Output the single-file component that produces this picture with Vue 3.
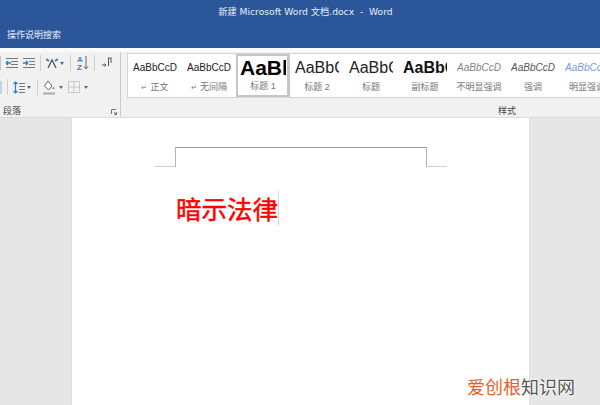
<script setup>
const styles = [
  { sample: 'AaBbCcDd', name: '正文', cls: 'normal', mark: true },
  { sample: 'AaBbCcDd', name: '无间隔', cls: 'normal', mark: true },
  { sample: 'AaBb', name: '标题 1', cls: 'h1', selected: true },
  { sample: 'AaBbC', name: '标题 2', cls: 'h2' },
  { sample: 'AaBbC', name: '标题', cls: 'h2' },
  { sample: 'AaBbC', name: '副标题', cls: 'h3' },
  { sample: 'AaBbCcDd', name: '不明显强调', cls: 'em1' },
  { sample: 'AaBbCcDd', name: '强调', cls: 'em2' },
  { sample: 'AaBbCcDd', name: '明显强调', cls: 'em3' }
]
</script>

<template>
  <div class="window">
    <header class="titlebar">
      <div class="title">新建 Microsoft Word 文档.docx&nbsp; - &nbsp;Word</div>
      <div class="search">操作说明搜索</div>
    </header>

    <section class="ribbon">
      <div class="para">
        <div class="tool-row">
          <svg width="36" height="14" viewBox="0 0 36 14">
            <path d="M.5 0v14" stroke="#c4c4c4" />
            <path d="M6 2.500h12M6 11.500h12M11 5.500h7M11 8.500h7" stroke="#7a7a7a" />
            <path d="M6 7h5M6 7l2-2M6 7l2 2" stroke="#2f7fc8" fill="none" stroke-width="1.300" />
            <path d="M23 2.500h12M23 11.500h12M29 5.500h6M29 8.500h6" stroke="#7a7a7a" />
            <path d="M23 7h5M28 7l-2-2M28 7l-2 2" stroke="#2f7fc8" fill="none" stroke-width="1.300" />
          </svg>
          <i class="sep ml4"></i>
          <svg class="ml5" width="12" height="14" viewBox="0 0 12 14">
            <path d="M2 12l4-8 4 8" stroke="#555" fill="none" stroke-width="1.300" />
            <path d="M0 3l3 2M12 3L9 5" stroke="#2f7fc8" stroke-width="2" />
          </svg>
          <span class="drop ml2"></span>
          <i class="sep ml6"></i>
          <svg class="ml6" width="12" height="16" viewBox="0 0 12 16">
            <text x="0" y="7" class="az a">A</text>
            <text x="0" y="15" class="az z">Z</text>
            <path d="M9 1v13M7 11.500L9 14l2-2.500" stroke="#666" fill="none" />
          </svg>
          <i class="sep ml5"></i>
          <svg class="ml7" width="10" height="14" viewBox="0 0 10 14">
            <path d="M6.500 2v8M9 2v5M6 2h3.500" stroke="#555" fill="none" />
            <path d="M0 9h4L2.500 7.500M4 9l-1.500 1.500" stroke="#555" fill="none" />
          </svg>
        </div>
        <div class="tool-row second">
          <i class="align-btn"></i>
          <i class="sep ml5"></i>
          <svg class="ml5" width="12" height="15" viewBox="0 0 12 15">
            <path d="M2.500 2v11M.5 4l2-2 2 2M.5 11l2 2 2-2" stroke="#2f7fc8" fill="none" stroke-width="1.200" />
            <path d="M6 3.500h6M6 6.500h6M6 9.500h6M6 12.500h6" stroke="#777" />
          </svg>
          <span class="drop ml2"></span>
          <i class="sep ml6"></i>
          <svg class="ml5" width="12" height="15" viewBox="0 0 12 15">
            <path d="M5 1l4 5-3.500 4-4-4z" fill="#fff" stroke="#666" />
            <path d="M10.500 6.500l1 2.500h-2z" fill="#2f7fc8" />
            <path d="M0 13.500h12" stroke="#a9a9a9" stroke-width="2" />
          </svg>
          <span class="drop ml4"></span>
          <svg class="ml5" width="12" height="12" viewBox="0 0 12 12">
            <path d="M.5.500h11v11H.5zM6 .5v11M.5 6h11" fill="none" stroke="#a8a8a8" stroke-dasharray="1 1" />
          </svg>
          <span class="drop ml4"></span>
        </div>
        <div class="group-foot">
          <span class="group-label">段落</span>
          <svg width="6" height="6" viewBox="0 0 6 6">
            <path d="M.5 5V.5H5M3 3l2.500 2.500M5.500 3v2.500H3" fill="none" stroke="#777" />
          </svg>
        </div>
      </div>

      <div class="styles">
        <div class="gallery">
          <div
            v-for="item in styles"
            :key="item.name"
            class="style-item"
            :class="{ selected: item.selected }"
          >
            <div class="sample" :class="item.cls">{{ item.sample }}</div>
            <div class="style-name"><span v-if="item.mark" class="mark">↵</span>{{ item.name }}</div>
          </div>
        </div>
        <div class="group-label center">样式</div>
      </div>
    </section>

    <main class="canvas">
      <div class="page">
        <div class="header-mark">
          <i class="tick"></i>
          <i class="bracket"></i>
          <i class="tick"></i>
        </div>
        <div class="body-text"><span class="typed">暗示法律</span><i class="caret"></i></div>
      </div>
    </main>

    <div class="watermark">爱创根<span>知识网</span></div>
  </div>
</template>

<style scoped>
.window {
  position: relative;
  width: 600px;
  height: 405px;
  overflow: hidden;
  display: flex;
  flex-direction: column;
  background: #e6e6e6;
  font-family: "Liberation Sans", "Noto Sans CJK SC", sans-serif;
}
.titlebar {
  height: 48px;
  background: #2b579a;
  color: #e8eef7;
  font-size: 9px;
  flex: none;
}
.title {
  height: 23px;
  line-height: 23px;
  text-align: center;
  font-family: "DejaVu Sans", "Noto Sans CJK SC", sans-serif;
  font-size: 9.200px;
  padding-left: 11px;
}
.search {
  padding: 6px 0 0 7px;
  line-height: 13px;
}
.ribbon {
  height: 70px;
  flex: none;
  box-sizing: border-box;
  display: flex;
  background: #f1f1f1;
  border-top: 4px solid #fafafa;
  border-bottom: 1px solid #d9d9d9;
}
.para {
  width: 121px;
  flex: none;
  box-sizing: border-box;
  border-right: 1px solid #c9c9c9;
  margin-bottom: 1px;
  display: flex;
  flex-direction: column;
}
.tool-row {
  height: 22px;
  flex: none;
  display: flex;
  align-items: center;
}
.tool-row.second {
  margin-top: 2px;
}
.ml2 { margin-left: 2px; }
.ml4 { margin-left: 4px; }
.ml5 { margin-left: 5px; }
.ml6 { margin-left: 6px; }
.ml7 { margin-left: 7px; }
.sep {
  width: 1px;
  height: 16px;
  background: #d0d0d0;
}
.drop {
  width: 0;
  height: 0;
  border-left: 2.500px solid transparent;
  border-right: 2.500px solid transparent;
  border-top: 3px solid #666;
}
.align-btn {
  width: 2px;
  height: 13px;
  background: #bcd3ea;
}
.az {
  font-size: 8px;
  font-weight: bold;
}
.az.a {
  fill: #3b86cf;
}
.az.z {
  fill: #8a4fb8;
}
.group-foot {
  display: flex;
  justify-content: space-between;
  align-items: center;
  padding: 7px 3px 0 3px;
}
.group-label {
  font-size: 9px;
  line-height: 13px;
  color: #444;
}
.group-label.center {
  padding: 7px 0 0 371px;
}
.styles {
  flex: 1;
  min-width: 0;
  padding: 1px 0 0 6px;
}
.gallery {
  height: 45px;
  box-sizing: border-box;
  display: flex;
  background: #fff;
  border: 1px solid #d4d4d4;
  border-right: 0;
  overflow: hidden;
}
.style-item {
  width: 54px;
  flex: none;
  box-sizing: border-box;
  padding: 0 3px;
  overflow: hidden;
}
.style-item.selected {
  border: 3px solid #c6c6c6;
  border-left-width: 2px;
  padding: 0 1px 0 2px;
  margin-top: -1px;
  margin-bottom: -1px;
  height: 45px;
}
.sample {
  height: 27px;
  line-height: 28px;
  white-space: nowrap;
  overflow: hidden;
  color: #222;
  width: 44px;
  margin: 0 auto;
}
.normal {
  font-size: 10px;
}
.h1 {
  font-size: 21px;
  font-weight: bold;
  color: #000;
  width: 46px;
  height: 24px;
  line-height: 24px;
}
.h2 {
  font-size: 16px;
}
.h3 {
  font-size: 16px;
  font-weight: bold;
  color: #111;
}
.em1,
.em2,
.em3 {
  font-size: 10px;
  font-style: italic;
}
.em1 {
  color: #858585;
}
.em2 {
  color: #555;
}
.em3 {
  color: #7c9bdc;
}
.style-name {
  text-align: center;
  font-size: 9px;
  line-height: 13px;
  color: #777;
  white-space: nowrap;
}
.mark {
  font-size: 7px;
  margin-right: 3px;
}
.canvas {
  flex: 1;
  display: flex;
  justify-content: center;
  min-height: 0;
  padding-left: 1px;
}
.page {
  width: 457px;
  background: #fff;
  box-shadow: 0 0 0 1px #dcdcdc;
  padding-top: 29px;
  box-sizing: border-box;
}
.header-mark {
  display: flex;
  align-items: flex-end;
  padding-left: 83px;
}
.bracket {
  width: 250px;
  height: 19px;
  border: 1px solid #b4b4b4;
  border-top-color: #9a9a9a;
  border-bottom: 0;
}
.tick {
  width: 20px;
  height: 1px;
  background: #cfcfcf;
}
.body-text {
  display: flex;
  align-items: center;
  height: 35px;
  margin: 24px 0 0 104px;
  color: #f00;
  font-size: 25.500px;
  font-family: "Noto Sans CJK SC", sans-serif;
  -webkit-text-stroke: .5px #f00;
}
.typed {
  margin-top: -3px;
}
.caret {
  width: 1px;
  height: 35px;
  background: #d8d8d8;
}
.watermark {
  position: absolute;
  left: 467px;
  top: 374px;
  font-size: 18px;
  line-height: 24px;
  color: #e0642a;
  font-family: "Noto Sans CJK SC", sans-serif;
  text-shadow: 0 0 2px #fff, 0 0 2px #fff, 0 0 1px #fff;
}
.watermark span {
  color: #555;
}
</style>
